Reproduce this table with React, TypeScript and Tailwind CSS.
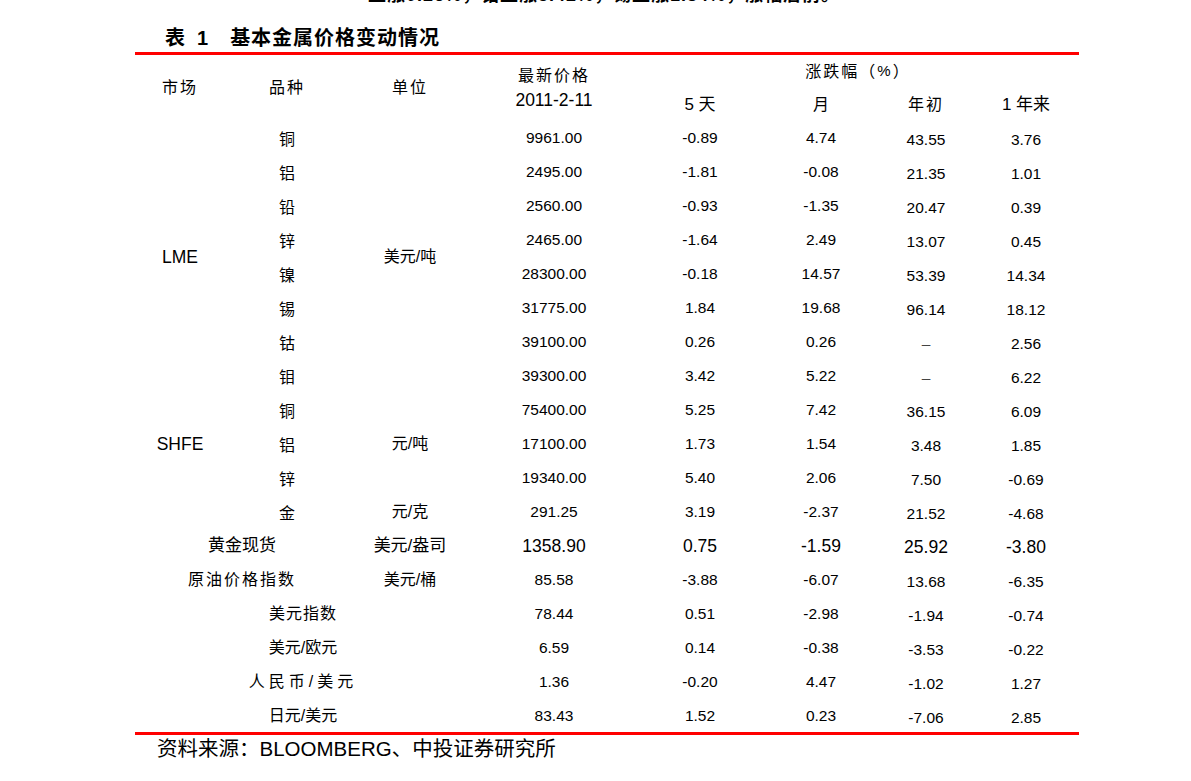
import React from "react";

type Row = {
  r: string;
  v?: string;
  p: string;
  d: [string, string, string, string];
  big?: boolean;
};

const rows: Row[] = [
  { r: "row-start-3", v: "铜", p: "9961.00", d: ["-0.89", "4.74", "43.55", "3.76"] },
  { r: "row-start-4", v: "铝", p: "2495.00", d: ["-1.81", "-0.08", "21.35", "1.01"] },
  { r: "row-start-5", v: "铅", p: "2560.00", d: ["-0.93", "-1.35", "20.47", "0.39"] },
  { r: "row-start-6", v: "锌", p: "2465.00", d: ["-1.64", "2.49", "13.07", "0.45"] },
  { r: "row-start-7", v: "镍", p: "28300.00", d: ["-0.18", "14.57", "53.39", "14.34"] },
  { r: "row-start-8", v: "锡", p: "31775.00", d: ["1.84", "19.68", "96.14", "18.12"] },
  { r: "row-start-9", v: "钴", p: "39100.00", d: ["0.26", "0.26", "–", "2.56"] },
  { r: "row-start-10", v: "钼", p: "39300.00", d: ["3.42", "5.22", "–", "6.22"] },
  { r: "row-start-11", v: "铜", p: "75400.00", d: ["5.25", "7.42", "36.15", "6.09"] },
  { r: "row-start-12", v: "铝", p: "17100.00", d: ["1.73", "1.54", "3.48", "1.85"] },
  { r: "row-start-13", v: "锌", p: "19340.00", d: ["5.40", "2.06", "7.50", "-0.69"] },
  { r: "row-start-14", v: "金", p: "291.25", d: ["3.19", "-2.37", "21.52", "-4.68"] },
  { r: "row-start-15", p: "1358.90", d: ["0.75", "-1.59", "25.92", "-3.80"], big: true },
  { r: "row-start-16", p: "85.58", d: ["-3.88", "-6.07", "13.68", "-6.35"] },
  { r: "row-start-17", p: "78.44", d: ["0.51", "-2.98", "-1.94", "-0.74"] },
  { r: "row-start-18", p: "6.59", d: ["0.14", "-0.38", "-3.53", "-0.22"] },
  { r: "row-start-19", p: "1.36", d: ["-0.20", "4.47", "-1.02", "1.27"] },
  { r: "row-start-20", p: "83.43", d: ["1.52", "0.23", "-7.06", "2.85"] },
];

const cell = "flex items-center justify-center whitespace-nowrap";

export default function App() {
  return (
    <div className="w-[1191px] h-[781px] overflow-hidden bg-white text-black font-['Liberation_Sans','Noto_Sans_CJK_SC',sans-serif]">
      <div className="ml-[135px] w-[944px]">
        {/* clipped previous paragraph line */}
        <div className="h-[6px] overflow-hidden pl-[233px]">
          <div className="mt-[-14px] text-[18px] leading-[18px] font-bold whitespace-nowrap tracking-[1px]">
            上涨0.26%，钼上涨3.42%，锡上涨1.84%，涨幅居前。
          </div>
        </div>

        {/* title */}
        <div className="h-[46px] flex items-end pl-[30px] text-[20px] leading-[28px] font-bold">
          <span>表</span>
          <span className="ml-[12px]">1</span>
          <span className="ml-[22px] tracking-[1px]">基本金属价格变动情况</span>
        </div>
        <div className="h-[3px] bg-[#ff0000]" />

        {/* table */}
        <div className="grid grid-cols-[90px_124px_122px_166px_126px_116px_94px_106px] grid-rows-[33px_33px_repeat(18,34px)] text-[16px]">
          <div className={`${cell} col-start-1 row-start-1 row-span-2 tracking-[2px]`}>市场</div>
          <div className={`${cell} col-start-2 row-start-1 row-span-2 tracking-[2px]`}>品种</div>
          <div className={`${cell} col-start-3 row-start-1 row-span-2 tracking-[2px]`}>单位</div>
          <div className={`${cell} col-start-4 row-start-1 row-span-2 flex-col`}>
            <div className="leading-[24px] tracking-[2px]">最新价格</div>
            <div className="leading-[24px] text-[17.5px]">2011-2-11</div>
          </div>
          <div className={`${cell} col-start-5 col-span-4 row-start-1 tracking-[2px]`}>
            涨跌幅<span>（</span>
            <span className="text-[15px]">%</span>
            <span>）</span>
          </div>
          <div className={`${cell} col-start-5 row-start-2 pt-[1px] text-[17px]`}>5 天</div>
          <div className={`${cell} col-start-6 row-start-2 pt-[1px]`}>月</div>
          <div className={`${cell} col-start-7 row-start-2 pt-[1px] tracking-[2px]`}>年初</div>
          <div className={`${cell} col-start-8 row-start-2 pt-[1px] text-[17px]`}>1 年来</div>

          {/* spanning labels */}
          <div className={`${cell} col-start-1 row-start-3 row-span-8 text-[17.5px]`}>LME</div>
          <div className={`${cell} col-start-3 row-start-3 row-span-8`}>美元/吨</div>
          <div className={`${cell} col-start-1 row-start-11 row-span-3 text-[17.5px]`}>SHFE</div>
          <div className={`${cell} col-start-3 row-start-11 row-span-3`}>元/吨</div>
          <div className={`${cell} col-start-3 row-start-14`}>元/克</div>
          <div className={`${cell} col-start-1 col-span-2 row-start-15 text-[17px]`}>黄金现货</div>
          <div className={`${cell} col-start-3 row-start-15 text-[17px]`}>美元/盎司</div>
          <div className={`${cell} col-start-1 col-span-2 row-start-16 tracking-[2px]`}>原油价格指数</div>
          <div className={`${cell} col-start-3 row-start-16`}>美元/桶</div>
          <div className={`${cell} col-start-1 col-span-3 row-start-17 tracking-[1px]`}>美元指数</div>
          <div className={`${cell} col-start-1 col-span-3 row-start-18`}>美元/欧元</div>
          <div className={`${cell} col-start-1 col-span-3 row-start-19 tracking-[4px]`}>人民币/美元</div>
          <div className={`${cell} col-start-1 col-span-3 row-start-20`}>日元/美元</div>

          {rows.map((row, i) => (
            <React.Fragment key={i}>
              {row.v && <div className={`${cell} col-start-2 ${row.r} pt-[3px]`}>{row.v}</div>}
              <div className={`${cell} col-start-4 ${row.r} ${row.big ? "text-[17.5px]" : "text-[15.5px]"}`}>{row.p}</div>
              <div className={`${cell} col-start-5 ${row.r} ${row.big ? "text-[17.5px]" : "text-[15.5px]"}`}>{row.d[0]}</div>
              <div className={`${cell} col-start-6 ${row.r} ${row.big ? "text-[17.5px]" : "text-[15.5px]"}`}>{row.d[1]}</div>
              <div className={`${cell} col-start-7 ${row.r} pt-[3px] ${row.big ? "text-[17.5px]" : "text-[15.5px]"} ${row.d[2] === "–" ? "text-[#444]" : ""}`}>{row.d[2]}</div>
              <div className={`${cell} col-start-8 ${row.r} pt-[3px] ${row.big ? "text-[17.5px]" : "text-[15.5px]"}`}>{row.d[3]}</div>
            </React.Fragment>
          ))}
        </div>

        <div className="h-[3px] bg-[#ff0000] mt-[-1px]" />

        {/* source */}
        <div className="pl-[22px] text-[20.5px] leading-[28px] whitespace-nowrap">资料来源：BLOOMBERG、中投证券研究所</div>
      </div>
    </div>
  );
}
